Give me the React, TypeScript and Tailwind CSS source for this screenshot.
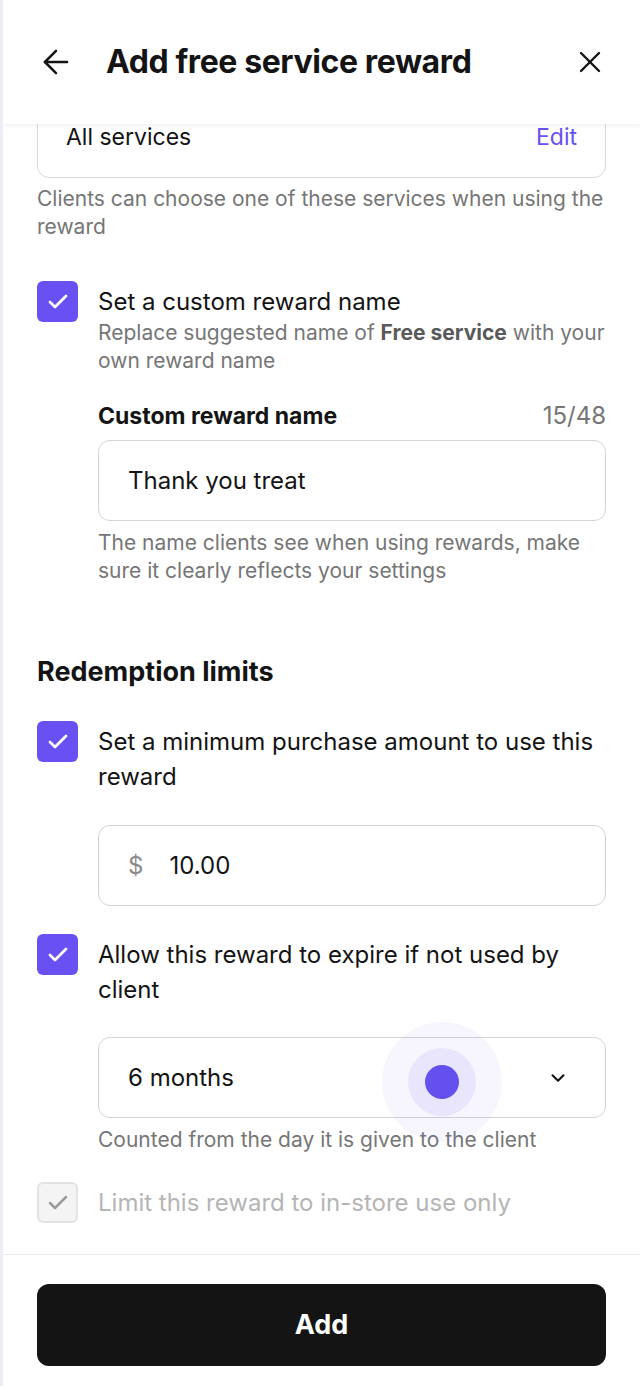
import { ArrowLeft, X, ChevronDown, Check } from 'lucide-react';
import type { ReactNode } from 'react';

const font = { fontFamily: 'Inter, "Noto Sans", sans-serif' };

function CheckBox({ disabled = false }: { disabled?: boolean }) {
  if (disabled) {
    return (
      <div className="w-[41px] h-[41px] shrink-0 rounded-[6px] border-2 border-[#e2e2e2] bg-[#f4f4f4] flex items-center justify-center">
        <Check size={24} strokeWidth={2.5} className="text-[#9b9b9b]" />
      </div>
    );
  }
  return (
    <div className="w-[41px] h-[41px] shrink-0 rounded-[6px] bg-[#6950f3] flex items-center justify-center">
      <Check size={24} strokeWidth={2.75} className="text-white" />
    </div>
  );
}

function CheckRow({ label, disabled, children }: { label: ReactNode; disabled?: boolean; children?: ReactNode }) {
  return (
    <div className="flex gap-[20px]">
      <CheckBox disabled={disabled} />
      <div className="flex-1 pt-[3px]">
        <p className={`text-[24px] leading-[35px] ${disabled ? 'text-[#b5b5b5]' : 'text-[#141414]'}`}>{label}</p>
        {children}
      </div>
    </div>
  );
}

export default function App() {
  return (
    <div style={font} className="w-[640px] h-[1386px] bg-white border-l-[3px] border-[#ededf5] overflow-hidden flex flex-col">
      <header className="relative z-10 h-[124px] shrink-0 bg-white shadow-[0_2px_4px_rgba(0,0,0,0.06)] flex items-center pl-[34px] pr-[32px]">
        <ArrowLeft size={38} strokeWidth={1.6} className="text-[#141414]" />
        <h1 className="ml-[31px] flex-1 text-[32px] font-bold tracking-[-0.4px] text-[#141414]">Add free service reward</h1>
        <X size={36} strokeWidth={1.6} className="text-[#141414]" />
      </header>

      <main className="flex-1 px-[34px]">
        <div className="-mt-[27px] h-[81px] rounded-xl border border-[#d9d9d9] flex items-center justify-between px-[28px]">
          <span className="text-[23px] text-[#141414]">All services</span>
          <span className="text-[23px] text-[#6950f3]">Edit</span>
        </div>
        <p className="mt-[7px] text-[21px] leading-[28px] text-[#767676]">
          Clients can choose one of these services when using the reward
        </p>

        <div className="mt-[40px]">
          <CheckRow label="Set a custom reward name">
            <p className="text-[21px] leading-[28px] text-[#767676]">
              Replace suggested name of <span className="font-bold text-[#5a5a5a]">Free service</span> with your own reward name
            </p>
            <div className="mt-[26px] flex items-center justify-between leading-[30px]">
              <span className="text-[23px] font-bold text-[#141414]">Custom reward name</span>
              <span className="text-[24px] text-[#767676]">15/48</span>
            </div>
            <div className="mt-[9px] h-[81px] rounded-xl border border-[#d4d4d4] flex items-center px-[29px]">
              <span className="text-[24px] text-[#141414]">Thank you treat</span>
            </div>
            <p className="mt-[8px] text-[21px] leading-[28px] text-[#767676]">
              The name clients see when using rewards, make sure it clearly reflects your settings
            </p>
          </CheckRow>
        </div>

        <h2 className="mt-[70px] text-[27px] leading-[34px] font-bold text-[#141414]">Redemption limits</h2>

        <div className="mt-[32px]">
          <CheckRow label="Set a minimum purchase amount to use this reward">
            <div className="mt-[31px] h-[81px] rounded-xl border border-[#d4d4d4] flex items-center px-[29px] gap-[26px]">
              <span className="text-[24px] text-[#8a8a8a]">$</span>
              <span className="text-[24px] text-[#141414]">10.00</span>
            </div>
          </CheckRow>
        </div>

        <div className="mt-[28px]">
          <CheckRow label="Allow this reward to expire if not used by client">
            <div className="relative mt-[30px] h-[81px] rounded-xl border border-[#d4d4d4] flex items-center justify-between px-[29px] pr-[36px]">
              <span className="text-[24px] text-[#141414]">6 months</span>
              <ChevronDown size={22} strokeWidth={2.25} className="text-[#141414]" />
              <div className="absolute left-[283px] top-[-16px] w-[120px] h-[120px] rounded-full bg-[#6950f3]/[0.05] flex items-center justify-center pointer-events-none">
                <div className="w-[68px] h-[68px] rounded-full bg-[#6950f3]/[0.1] flex items-center justify-center">
                  <div className="w-[34px] h-[34px] rounded-full bg-[#6350ee]" />
                </div>
              </div>
            </div>
            <p className="mt-[8px] text-[21px] leading-[28px] text-[#767676]">Counted from the day it is given to the client</p>
          </CheckRow>
        </div>

        <div className="mt-[28px]">
          <CheckRow label="Limit this reward to in-store use only" disabled />
        </div>
      </main>

      <footer className="shrink-0 border-t border-[#ececec] px-[34px] pt-[29px] pb-[20px]">
        <button className="w-full h-[82px] rounded-xl bg-[#141414] text-white text-[27px] font-bold">Add</button>
      </footer>
    </div>
  );
}
